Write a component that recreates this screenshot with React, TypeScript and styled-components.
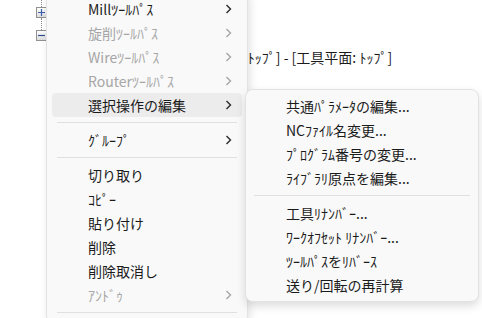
import React from "react";
import styled, {createGlobalStyle} from "styled-components";

const GlobalStyles = createGlobalStyle`
    html, body {
        margin: 0;
        padding: 0;
        background: #ffffff;
        overflow: hidden;
    }

    body {
        font-family: "Noto Sans CJK JP", "Noto Sans", sans-serif;
        font-size: 14px;
        color: #1b1b1b;
    }
`;

const Page = styled.div`
    position: relative;
    width: 482px;
    height: 318px;
    display: flex;
    overflow: hidden;
`;

const Tree = styled.div`
    width: 12px;
    margin-left: 35px;
    display: flex;
    flex-direction: column;
    align-items: center;
`;

const DottedLine = styled.div<{ $h: number }>`
    width: 0;
    height: ${p => p.$h}px;
    border-left: 1px dotted #8a8a8a;
`;

const ToggleBox = styled.div`
    width: 9px;
    height: 9px;
    border: 1px solid #919191;
    background: linear-gradient(#ffffff, #dcdcdc);
    display: flex;
    align-items: center;
    justify-content: center;
`;

const ViewTitle = styled.div`
    padding: 48px 0 0 161px;
    white-space: nowrap;
    line-height: 18px;
`;

const Menu = styled.div`
    position: absolute;
    left: 46px;
    top: -8px;
    width: 202px;
    padding: 4px 0;
    background: #f9f9f9;
    border: 1px solid #e3e3e3;
    border-radius: 7px;
    box-shadow: 2px 2px 8px rgba(0, 0, 0, 0.12);
    box-sizing: border-box;
`;

const SubMenu = styled.div`
    position: absolute;
    left: 245px;
    top: 89px;
    width: 234px;
    padding: 4px 0;
    background: #f9f9f9;
    border: 1px solid #e3e3e3;
    border-radius: 8px;
    box-shadow: 0 4px 10px rgba(0, 0, 0, 0.14);
    box-sizing: border-box;
`;

const Item = styled.div<{ $disabled?: boolean; $active?: boolean; $indent: number }>`
    height: 24px;
    margin: 0 5px;
    padding: 0 10px 0 ${p => p.$indent}px;
    display: flex;
    align-items: center;
    justify-content: space-between;
    border-radius: 4px;
    white-space: nowrap;
    line-height: 24px;
    color: ${p => (p.$disabled ? "#a6a6a6" : "#1b1b1b")};
    background: ${p => (p.$active ? "#ececec" : "transparent")};
`;

const Separator = styled.div<{ $inset: number }>`
    height: 1px;
    margin: 5px ${p => p.$inset}px;
    background: #e0e0e0;
`;

const Chevron = ({disabled}: { disabled?: boolean }) => (
    <svg width="7" height="10" viewBox="0 0 7 10">
        <path d="M1.5 1 L5.5 5 L1.5 9" fill="none" stroke={disabled ? "#a6a6a6" : "#2a2a2a"}
              strokeWidth="1.4"/>
    </svg>
);

type Entry = { label: string; sub?: boolean; disabled?: boolean; active?: boolean } | "sep";

const MAIN: Entry[] = [
    {label: "Millﾂｰﾙﾊﾟｽ", sub: true},
    {label: "旋削ﾂｰﾙﾊﾟｽ", sub: true, disabled: true},
    {label: "Wireﾂｰﾙﾊﾟｽ", sub: true, disabled: true},
    {label: "Routerﾂｰﾙﾊﾟｽ", sub: true, disabled: true},
    {label: "選択操作の編集", sub: true, active: true},
    "sep",
    {label: "ｸﾞﾙｰﾌﾟ", sub: true},
    "sep",
    {label: "切り取り"},
    {label: "ｺﾋﾟｰ"},
    {label: "貼り付け"},
    {label: "削除"},
    {label: "削除取消し"},
    {label: "ｱﾝﾄﾞｩ", sub: true, disabled: true},
    "sep",
];

const SUB: Entry[] = [
    {label: "共通ﾊﾟﾗﾒｰﾀの編集..."},
    {label: "NCﾌｧｲﾙ名変更..."},
    {label: "ﾌﾟﾛｸﾞﾗﾑ番号の変更..."},
    {label: "ﾗｲﾌﾞﾗﾘ原点を編集..."},
    "sep",
    {label: "工具ﾘﾅﾝﾊﾞｰ..."},
    {label: "ﾜｰｸｵﾌｾｯﾄ ﾘﾅﾝﾊﾞｰ..."},
    {label: "ﾂｰﾙﾊﾟｽをﾘﾊﾞｰｽ"},
    {label: "送り/回転の再計算"},
];

function renderEntries(entries: Entry[], indent: number, sepInset: number) {
    return entries.map((e, i) =>
        e === "sep"
            ? <Separator key={i} $inset={sepInset}/>
            : <Item key={i} $indent={indent} $disabled={e.disabled} $active={e.active}>
                <span>{e.label}</span>
                {e.sub && <Chevron disabled={e.disabled}/>}
            </Item>
    );
}

export default function App() {
    return (
        <Page>
            <GlobalStyles/>
            <Tree>
                <DottedLine $h={7}/>
                <ToggleBox>
                    <svg width="7" height="7" viewBox="0 0 7 7">
                        <path d="M0 3.5 H7 M3.5 0 V7" stroke="#3b5fae" strokeWidth="1.2"/>
                    </svg>
                </ToggleBox>
                <DottedLine $h={12}/>
                <ToggleBox>
                    <svg width="7" height="7" viewBox="0 0 7 7">
                        <path d="M0 3.5 H7" stroke="#2f4f8f" strokeWidth="1.2"/>
                    </svg>
                </ToggleBox>
            </Tree>
            <ViewTitle>[ﾋﾞｭｰ: ﾄｯﾌﾟ] - [工具平面: ﾄｯﾌﾟ]</ViewTitle>
            <Menu>{renderEntries(MAIN, 36, 10)}</Menu>
            <SubMenu>{renderEntries(SUB, 35, 8)}</SubMenu>
        </Page>
    );
}
